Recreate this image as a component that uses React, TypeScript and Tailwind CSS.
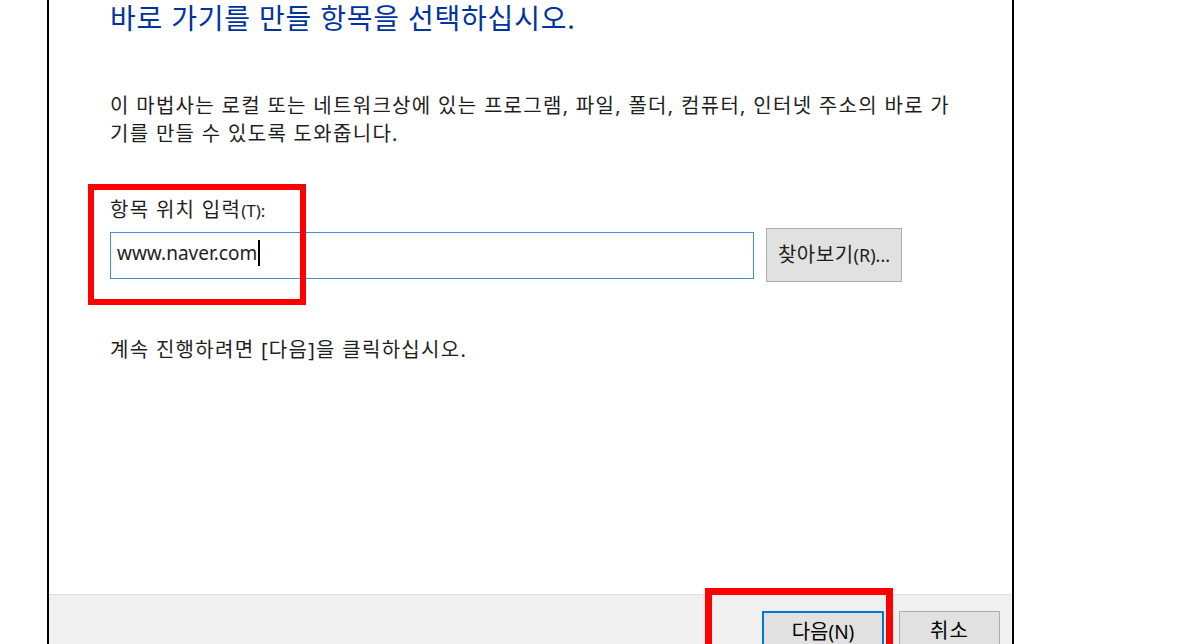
import React from 'react'

const FONT = { fontFamily: '"Noto Sans", "Noto Sans CJK KR", sans-serif' }

const App: React.FC = () => {
  return (
    <div className="w-[1194px] h-[644px] overflow-hidden bg-white flex" style={FONT}>
      <div className="w-[47px] shrink-0"></div>

      <div className="relative w-[967px] h-full border-x-2 border-black flex flex-col">
        <main className="flex-1 pl-[61px] text-[#1e1e1e]">
          <h1 className="text-[28px] leading-[36px] text-[#0033a0] tracking-[0.8px]">
            바로 가기를 만들 항목을 선택하십시오.
          </h1>

          <p className="mt-[56px] text-[20px] leading-[28px] tracking-[1.3px]">
            이 마법사는 로컬 또는 네트워크상에 있는 프로그램, 파일, 폴더, 컴퓨터, 인터넷 주소의 바로 가
            <br />
            기를 만들 수 있도록 도와줍니다.
          </p>

          <label className="block mt-[48px] text-[20px] leading-[28px] tracking-[1.3px]">
            항목 위치 입력<span className="text-[17px] tracking-normal">(T):</span>
          </label>

          <div className="mt-[3px] flex items-center">
            <div className="w-[644px] h-[47px] border border-[#3c8fdc] flex items-center pl-[6px] pb-[4px] text-[19px]">
              <span>www.naver.com</span>
              <span className="w-[2px] h-[26px] bg-black ml-[1px]"></span>
            </div>
            <button className="ml-[12px] w-[136px] h-[54px] bg-[#e1e1e1] border border-[#adadad] text-[20px] tracking-[0.5px] flex items-center justify-center">
              찾아보기<span className="text-[18px] tracking-normal">(R)...</span>
            </button>
          </div>

          <p className="mt-[54px] text-[20px] leading-[28px] tracking-[1.3px]">
            계속 진행하려면 [다음]을 클릭하십시오.
          </p>
        </main>

        <footer className="h-[50px] shrink-0 border-t border-[#dfdfdf] bg-[#f0f0f0] flex justify-end items-end pr-[12px] gap-[15px]">
          <button className="w-[122px] h-[33px] bg-[#e1e1e1] border-2 border-b-0 border-[#0078d7] text-[20px] leading-[28px] flex items-start justify-center pt-[5px]">
            다음<span className="text-[19px]">(N)</span>
          </button>
          <button className="w-[101px] h-[33px] bg-[#e1e1e1] border border-b-0 border-[#adadad] text-[20px] leading-[28px] tracking-[1px] flex items-start justify-center pt-[5px]">
            취소
          </button>
        </footer>

        {/* red annotation boxes */}
        <div className="absolute left-[39px] top-[184px] w-[218px] h-[121px] border-[6px] border-[#ff0000]"></div>
        <div className="absolute left-[656px] top-[588px] w-[188px] h-[70px] border-[7px] border-[#ff0000]"></div>
      </div>
    </div>
  )
}

export default App
